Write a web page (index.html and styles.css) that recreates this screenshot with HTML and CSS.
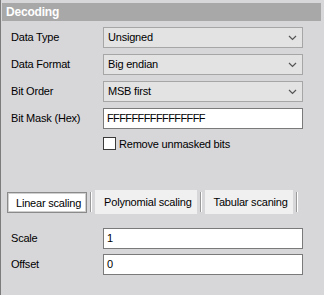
FILE: index.html
```html
<!DOCTYPE html>
<html>
<head>
<meta charset="utf-8">
<link rel="stylesheet" href="styles.css">
</head>
<body>
<div class="panel">
  <div class="header">Decoding</div>
  <div class="form">
    <div class="label">Data Type</div>
    <div class="select"><span>Unsigned</span><svg class="chev" width="9" height="6" viewBox="0 0 9 6"><polyline points="1,1 4.5,4.5 8,1" fill="none" stroke="#555" stroke-width="1.2"/></svg></div>
    <div class="label">Data Format</div>
    <div class="select"><span>Big endian</span><svg class="chev" width="9" height="6" viewBox="0 0 9 6"><polyline points="1,1 4.5,4.5 8,1" fill="none" stroke="#555" stroke-width="1.2"/></svg></div>
    <div class="label">Bit Order</div>
    <div class="select"><span>MSB first</span><svg class="chev" width="9" height="6" viewBox="0 0 9 6"><polyline points="1,1 4.5,4.5 8,1" fill="none" stroke="#555" stroke-width="1.2"/></svg></div>
    <div class="label">Bit Mask (Hex)</div>
    <div class="input mask">FFFFFFFFFFFFFFFF</div>
    <div class="label"></div>
    <div class="check"><span class="box"></span><span>Remove unmasked bits</span></div>
  </div>
  <div class="tabs">
    <div class="tab active">Linear scaling</div>
    <div class="sep"></div>
    <div class="tab">Polynomial scaling</div>
    <div class="sep"></div>
    <div class="tab">Tabular scaning</div>
    <div class="sep"></div>
  </div>
  <div class="form form2">
    <div class="label">Scale</div>
    <div class="input">1</div>
    <div class="label">Offset</div>
    <div class="input">0</div>
  </div>
</div>
</body>
</html>
```
FILE: styles.css
```css
html, body {
  margin: 0;
  padding: 0;
  background: #d7d6d9;
}
body {
  width: 324px;
  height: 295px;
  overflow: hidden;
  font-family: "Liberation Sans", Arial, sans-serif;
  font-size: 11px;
  letter-spacing: -0.2px;
  color: #000;
}
.panel {
  height: 295px;
  border-left: 1px solid #7c7c7c;
  box-sizing: border-box;
  padding-top: 3px;
}
.header {
  margin-left: 1px;
  width: 319px;
  height: 18px;
  background: #a8a8a8;
  color: #fff;
  font-weight: bold;
  font-size: 12px;
  line-height: 19px;
  padding-left: 4px;
  box-sizing: border-box;
}
.form {
  display: grid;
  grid-template-columns: 92px 200px;
  grid-auto-rows: 21px;
  row-gap: 6px;
  padding-left: 10px;
  margin-top: 6px;
}
.label {
  line-height: 21px;
  white-space: nowrap;
}
.select {
  display: flex;
  align-items: center;
  justify-content: space-between;
  background: #e3e3e3;
  border: 1px solid #a6a6a6;
  box-sizing: border-box;
  padding: 0 5px 0 4px;
  line-height: 19px;
}
.chev {
  display: block;
  margin-top: 1px;
}
.input {
  background: #fff;
  border: 1px solid #7a7a7a;
  box-sizing: border-box;
  padding-left: 3px;
  line-height: 19px;
}
.mask {
  letter-spacing: -0.6px;
}
.check {
  display: flex;
  align-items: center;
  gap: 3px;
  height: 13px;
  margin-top: 2px;
}
.box {
  width: 13px;
  height: 13px;
  box-sizing: border-box;
  border: 1px solid #3a3a3a;
  background: #fff;
}
.tabs {
  display: flex;
  align-items: stretch;
  height: 24px;
  margin-top: 34px;
  padding-left: 6px;
}
.tab {
  background: #f0f0f0;
  padding: 0 5px 0 9px;
  line-height: 24px;
  white-space: nowrap;
}
.tab.active {
  background: #fff;
  border: 1px solid #8a8a8a;
  box-shadow: inset 0 0 0 1px #cfcfcf;
  padding: 0 5px 0 8px;
  line-height: 20px;
  margin: 2px 0 1px;
}
.sep {
  width: 1px;
  border-left: 1px solid #9a9a9a;
  background: #fff;
  margin: 2px 3px 2px 3px;
}
.form2 {
  margin-top: 14px;
  row-gap: 5px;
}
```
